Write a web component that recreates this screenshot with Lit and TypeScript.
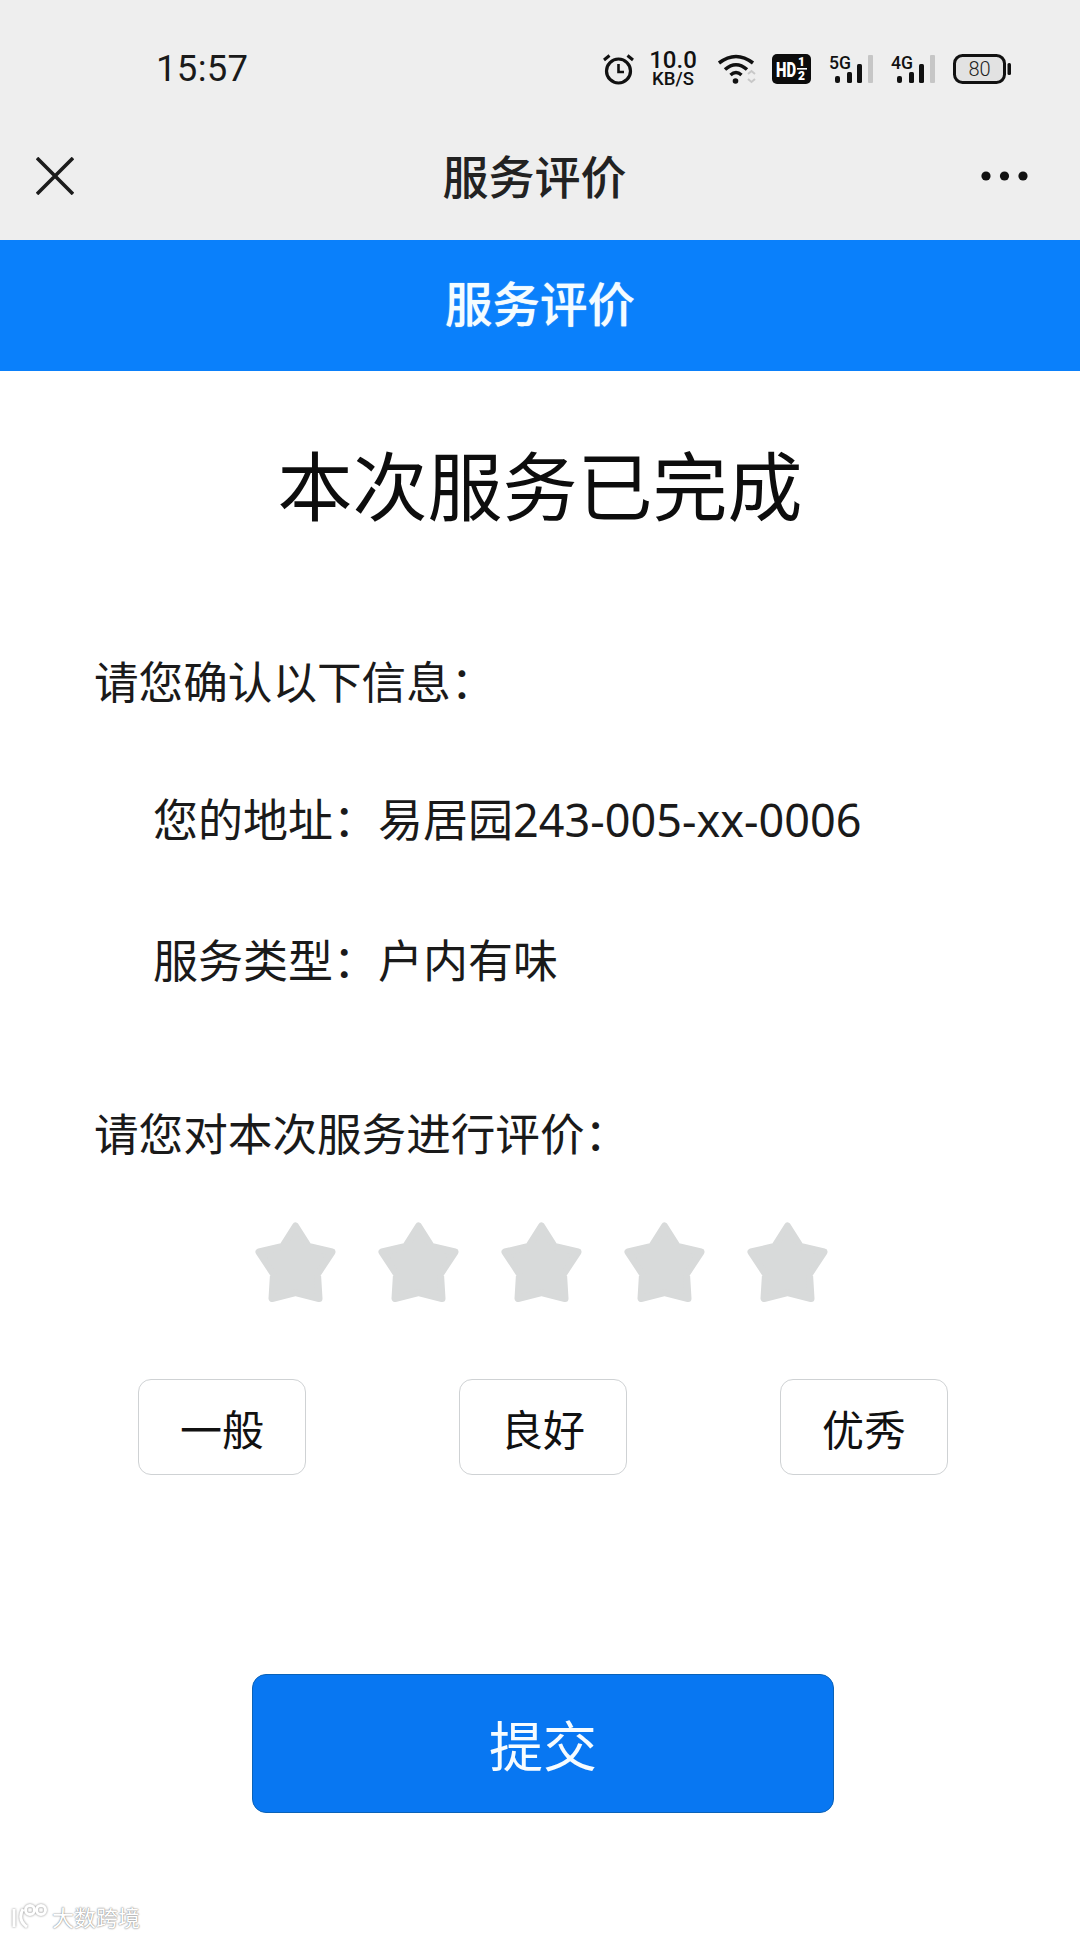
import { LitElement, html, css, svg } from "lit";
import { customElement } from "lit/decorators.js";

const STAR = svg`<svg class="star" viewBox="0 0 81 81"><path d="M40.5 4 L53.5 24.5 L77 30 L62.5 52 L64 76.5 L40.5 70.5 L17 76.5 L18.5 52 L4 30 L27.5 24.5 Z" fill="#d8dada" stroke="#d8dada" stroke-width="7" stroke-linejoin="round"/></svg>`;

const signal = (label: string) => svg`<svg class="sig" width="44" height="30" viewBox="0 0 44 30">
  <text x="0" y="15" font-family="Roboto, sans-serif" font-size="18" font-weight="500" fill="#111" textLength="22" lengthAdjust="spacingAndGlyphs">${label}</text>
  <rect x="6" y="22" width="5" height="7" rx="2" fill="#111"/>
  <rect x="18" y="18" width="5" height="11" rx="1.5" fill="#111"/>
  <rect x="28" y="10" width="5" height="19" rx="1.5" fill="#111"/>
  <rect x="39" y="1" width="5" height="28" rx="1" fill="#c6c6c6"/>
</svg>`;

@customElement("app-root")
export class AppRoot extends LitElement {
  static styles = css`
    :host {
      display: block;
      position: relative;
      width: 1080px;
      height: 1935px;
      overflow: hidden;
      background: #fff;
      color: #111;
      font-family: "Noto Sans CJK SC", "Noto Sans", sans-serif;
    }
    .top { background: #eeeeee; height: 240px; box-sizing: border-box; }
    .status {
      height: 120px;
      box-sizing: border-box;
      padding: 50px 68px 0 156px;
      display: flex;
      align-items: flex-start;
    }
    .time {
      font-family: Roboto, sans-serif;
      font-size: 36.5px;
      line-height: 38px;
      letter-spacing: 0.3px;
      color: #1a1a1a;
      flex: 1;
    }
    .icons { display: flex; align-items: center; height: 38px; }
    .alarm { margin: 0 -3px 0 3px; }
    .speed {
      font-family: Roboto, sans-serif;
      font-weight: 500;
      color: #111;
      text-align: center;
      width: 48px;
      margin: 0 20px 0 17px;
    }
    .speed b { display: block; font-weight: 500; font-size: 24px; line-height: 20px; }
    .speed span { display: block; font-size: 18.5px; line-height: 19px; }
    .wifi { margin-right: 15px; }
    .hd { margin-right: 18px; }
    .sig { margin-right: 18px; overflow: visible; }
    .nav {
      height: 120px;
      display: flex;
      align-items: center;
      justify-content: space-between;
      padding: 0 52px 8px 36px;
      box-sizing: border-box;
    }
    .nav-title {
      font-size: 46px;
      font-weight: 500;
      line-height: 60px;
      color: #222;
      margin: 0 0 5px 14px;
    }
    .banner {
      height: 131px;
      padding-bottom: 8px;
      box-sizing: border-box;
      background: #0a80fb;
      color: #f4fcff;
      display: flex;
      align-items: center;
      justify-content: center;
      font-size: 47.5px;
      font-weight: 500;
      text-shadow: 0 0 1px rgba(255, 255, 255, 0.85);
    }
    main { display: block; padding-top: 62px; }
    h1 {
      margin: 0 0 119px;
      font-size: 75px;
      font-weight: 400;
      line-height: 100px;
      text-align: center;
      color: #0d0d0d;
    }
    .line {
      font-family: "Noto Sans", "Noto Sans CJK SC", sans-serif;
      line-height: 60px;
      color: #1a1a1a;
      white-space: pre;
    }
    .section { padding-left: 94px; font-size: 44.6px; }
    .detail { padding-left: 153px; font-size: 45px; }
    .first { margin-top: 78px; }
    .next { margin-top: 81px; }
    .ask { margin-top: 113px; }
    .stars {
      display: flex;
      justify-content: center;
      gap: 42px;
      margin-top: 58px;
      padding-left: 2px;
    }
    .star { width: 81px; height: 81px; display: block; filter: blur(0.7px); }
    .choices {
      display: flex;
      justify-content: space-between;
      padding: 0 132px 0 138px;
      margin-top: 76px;
    }
    .choice {
      width: 168px;
      height: 96px;
      box-sizing: border-box;
      border: 1.5px solid #cfd2d4;
      border-radius: 13px;
      display: flex;
      align-items: center;
      justify-content: center;
      font-size: 42px;
      color: #111;
      background: #fff;
    }
    .submit {
      width: 582px;
      height: 139px;
      margin: 199px 0 0 252px;
      box-sizing: border-box;
      background: #0877f2;
      border: 1px solid #0a62b8;
      border-radius: 14px;
      color: #f6fcff;
      font-size: 54px;
      display: flex;
      align-items: center;
      justify-content: center;
    }
    .mark {
      position: absolute;
      left: 10px;
      top: 1901px;
      display: flex;
      align-items: center;
      gap: 5px;
      font-size: 22px;
      line-height: 30px;
      color: #fff;
      text-shadow: 0 0 2px #8a8a8a, 0 0 1px #8a8a8a;
    }
    .mark svg { filter: drop-shadow(0 0 1px #888); }
  `;

  render() {
    return html`
      <div class="top">
        <div class="status">
          <div class="time">15:57</div>
          <div class="icons">
            <svg class="alarm" width="33" height="32" viewBox="0 0 33 32" fill="none" stroke="#111" stroke-width="3.2">
              <circle cx="16.5" cy="18" r="12" />
              <path d="M16.5 11 V19 H22" stroke-width="2.6" />
              <path d="M2 7 L7.5 2.5 M31 7 L25.5 2.5" stroke-width="3" />
            </svg>
            <div class="speed"><b>10.0</b><span>KB/S</span></div>
            <svg class="wifi" width="40" height="30" viewBox="0 0 40 30" fill="none">
              <path d="M2 9 Q19 -4 36 9" stroke="#111" stroke-width="3.6" />
              <path d="M8 15.5 Q19 6 30 15.5" stroke="#111" stroke-width="3.6" />
              <path d="M13.5 21 Q19 16 24.5 21" stroke="#111" stroke-width="3.4" />
              <circle cx="18.5" cy="27" r="2.8" fill="#111" />
              <path d="M31 20 L34.5 17 L38 20 M31 25 L34.5 28 L38 25" stroke="#c8c8c8" stroke-width="2" />
            </svg>
            <svg class="hd" width="39" height="30" viewBox="0 0 39 30">
              <rect width="39" height="30" rx="5" fill="#0c0c0c" />
              <text x="4" y="23" font-family="Roboto, sans-serif" font-size="20" font-weight="900" fill="#fff" textLength="20" lengthAdjust="spacingAndGlyphs">HD</text>
              <text x="26" y="12" font-family="Roboto, sans-serif" font-size="12" font-weight="900" fill="#fff">1</text>
              <rect x="25" y="14" width="10" height="1.6" fill="#fff" />
              <text x="26" y="26" font-family="Roboto, sans-serif" font-size="12" font-weight="900" fill="#fff">2</text>
            </svg>
            ${signal("5G")}
            ${signal("4G")}
            <svg width="59" height="30" viewBox="0 0 59 30">
              <rect x="1.5" y="1.5" width="50" height="27" rx="8" fill="#e2e2e2" stroke="#111" stroke-width="3" />
              <rect x="54.5" y="9" width="3.5" height="12" rx="1.5" fill="#111" />
              <text x="26.5" y="22" text-anchor="middle" font-family="Roboto, sans-serif" font-size="20" font-weight="300" fill="#222">80</text>
            </svg>
          </div>
        </div>
        <div class="nav">
          <svg width="38" height="38" viewBox="0 0 38 38" stroke="#1c1c1c" stroke-width="3.6">
            <path d="M1 1 L37 37 M37 1 L1 37" />
          </svg>
          <div class="nav-title">服务评价</div>
          <svg width="47" height="10" viewBox="0 0 47 10" fill="#111">
            <circle cx="5" cy="5" r="4.6" /><circle cx="23.5" cy="5" r="4.6" /><circle cx="42" cy="5" r="4.6" />
          </svg>
        </div>
      </div>
      <div class="banner">服务评价</div>
      <main>
        <h1>本次服务已完成</h1>
        <div class="line section">请您确认以下信息：</div>
        <div class="line detail first">您的地址：易居园243-005-xx-0006</div>
        <div class="line detail next">服务类型：户内有味</div>
        <div class="line section ask">请您对本次服务进行评价：</div>
        <div class="stars">${STAR}${STAR}${STAR}${STAR}${STAR}</div>
        <div class="choices">
          <div class="choice">一般</div>
          <div class="choice">良好</div>
          <div class="choice">优秀</div>
        </div>
        <div class="submit">提交</div>
      </main>
      <div class="mark">
        <svg width="37" height="24" viewBox="0 0 37 24" fill="none" stroke="#fff" stroke-width="3">
          <path d="M4 5 L4 23 M13 5 Q7 16 17 23" />
          <circle cx="20" cy="6" r="4.5" /><circle cx="31" cy="6" r="4.5" />
        </svg>
        <span>大数跨境</span>
      </div>
    `;
  }
}
